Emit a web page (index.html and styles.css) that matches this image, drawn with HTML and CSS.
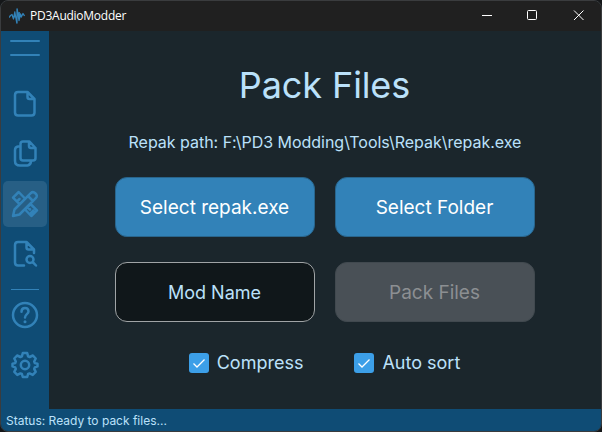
FILE: index.html
```html
<!DOCTYPE html>
<html lang="en">
<head>
<meta charset="utf-8">
<title>PD3AudioModder</title>
<link rel="stylesheet" href="styles.css">
</head>
<body>
<div class="window">
  <header class="titlebar">
    <svg class="logo" width="16" height="16" viewBox="0 0 16 16"><path d="M0 9.500L1.500 7.500 3 6.500 4.500 11 5.800 4 7.800 15 8.200 1 10 12.500 11.500 6 12.300 9 14 5.500 15.500 8M8 .5v15M5.800 3.500v6M10.200 4v7"/></svg>
    <span class="app-name">PD3AudioModder</span>
    <div class="controls">
      <svg width="46" height="30" viewBox="0 0 46 30"><path d="M18 14.500h10"/></svg>
      <svg width="46" height="30" viewBox="0 0 46 30"><rect x="17.500" y="9.500" width="9" height="9" rx="1"/></svg>
      <svg width="46" height="30" viewBox="0 0 46 30"><path d="M18 9.500l9.500 9.500M27.500 9.500L18 19"/></svg>
    </div>
  </header>
  <div class="body">
    <nav class="sidebar">
      <button class="menu" aria-label="Menu"><i></i><i></i></button>
      <button class="tool" aria-label="File"><svg width="30" height="30" viewBox="0 0 30 30"><path d="M8 3h9.500L24.500 10v13.500Q24.500 26.500 21.500 26.500H8Q5 26.500 5 23.500V6Q5 3 8 3ZM17.500 3v5Q17.500 10 19.500 10h5"/></svg></button>
      <button class="tool" aria-label="Batch"><svg width="30" height="30" viewBox="0 0 30 30"><path d="M13 2.500h6.500L25.500 9V19Q25.500 21.500 23 21.500H13Q10.500 21.500 10.500 19V5Q10.500 2.500 13 2.500ZM19 2.500v4.500Q19 9 21 9h4.500M10 7.500H8Q5 8 5 11v11q0 4.500 5 4.500h7.500q3-.3 3.500-4"/></svg></button>
      <button class="tool active" aria-label="Pack"><svg width="30" height="30" viewBox="0 0 30 30"><path d="M20.800 4.200Q23 2 25.500 4.500T25.800 9.200L9.500 25.500 3 27l1.500-6.500ZM18 7l5 5M15 9.500L8.700 3 3 8.700 9.500 15M7 12.500l2.500-2.500M15 20.500L21.300 27 27 21.300 20.500 15M17.500 18l2.500 2.500M20 15.500l-5 5M21 24l2.500-2.500"/></svg></button>
      <button class="tool" aria-label="Search file"><svg width="30" height="30" viewBox="0 0 30 30"><path d="M14 26.500H8Q5 26.500 5 23.500V6Q5 3 8 3h8.500L24 10.500V14M16.500 3v5.500q0 2 2 2H24"/><circle cx="20" cy="20.500" r="3.500"/><path d="M23 23.300L26 26.500"/></svg></button>
      <hr>
      <button class="tool" aria-label="Help"><svg width="30" height="30" viewBox="0 0 30 30"><circle cx="15" cy="15" r="12"/><path d="M11.500 11.800Q11.500 8 15 8t3.500 3.500c0 2.500-3.500 2.800-3.500 6"/><circle class="dot" cx="15" cy="21.700" r="1.500"/></svg></button>
      <button class="tool" aria-label="Settings"><svg width="30" height="30" viewBox="0 0 30 30"><circle cx="15" cy="15" r="4.200"/><path d="M12.800 3h4.400l.9 3.300 1.500.7 3.300-1.500 2.800 3-1.500 3 .6 1.600 2.700.7v2.600l-2.700 1-.6 1.500 1.500 3-3 3-3.100-1.500-1.500.6-.9 3h-4.400l-.9-3-1.500-.6-3.100 1.500-3-3 1.500-3-.6-1.500-2.700-1v-2.600l2.700-.7.6-1.600-1.500-3 2.800-3L10.400 7l1.500-.7Z"/></svg></button>
    </nav>
    <main class="content">
      <h1>Pack Files</h1>
      <p class="path">Repak path: F:\PD3 Modding\Tools\Repak\repak.exe</p>
      <div class="grid">
        <button class="box">Select repak.exe</button>
        <button class="box">Select Folder</button>
        <div class="box field">Mod Name</div>
        <button class="box disabled">Pack Files</button>
      </div>
      <div class="checks">
        <label><svg width="20" height="20" viewBox="0 0 20 20"><path d="M4.500 10.500L8 14l7.500-7.500"/></svg><span>Compress</span></label>
        <label><svg width="20" height="20" viewBox="0 0 20 20"><path d="M4.500 10.500L8 14l7.500-7.500"/></svg><span>Auto sort</span></label>
      </div>
    </main>
  </div>
  <footer class="status">Status: Ready to pack files...</footer>
</div>
</body>
</html>
```
FILE: styles.css
```css
* { box-sizing: border-box; }
body { margin: 0; background: #151719; font-family: Inter, sans-serif; }
button { border: 0; padding: 0; background: none; font: inherit; }
.window { width: 602px; height: 432px; border: 1px solid #3a3c3e; border-radius: 8px; overflow: hidden; display: flex; flex-direction: column; background: #1b262c; }
.titlebar { height: 30px; flex: none; display: flex; align-items: center; background: #202020; color: #fff; }
.logo { margin-left: 8px; margin-top: -1px; fill: none; stroke: #3282b8; stroke-width: 1.3; stroke-linejoin: round; }
.app-name { margin-left: 5px; margin-top: -2px; font: 12px "Open Sans", sans-serif; letter-spacing: -.25px; }
.controls { margin-left: auto; margin-right: -1px; display: flex; }
.controls svg { fill: none; stroke: #fff; stroke-width: 1; }
.body { flex: 1; display: flex; min-height: 0; }
.sidebar { width: 48px; background: #0f4c75; display: flex; flex-direction: column; align-items: center; gap: 4px; }
.menu { width: 30px; height: 46px; display: flex; flex-direction: column; gap: 12px; padding-top: 9px; }
.menu i { height: 2px; width: 30px; background: #3282b8; border-radius: 1px; }
.tool { width: 44px; height: 46px; border-radius: 5px; display: flex; align-items: center; justify-content: center; }
.tool svg { fill: none; stroke: #3282b8; stroke-width: 2.5; stroke-linejoin: round; stroke-linecap: round; }
.tool .dot { fill: #3282b8; stroke: none; }
.active { background: #275f85; }
.sidebar hr { width: 28px; height: 1px; border: 0; margin: 8px 0 -2px; background: #3282b8; }
.content { flex: 1; display: flex; flex-direction: column; align-items: center; color: #bbe1fa; padding-right: 1px; }
h1 { margin: 32px 0 0; font-size: 36px; line-height: 44px; font-weight: 400; letter-spacing: -.1px; }
.path { margin: 25px 0 0; padding-left: 1px; font-size: 16px; line-height: 20px; letter-spacing: -.02px; white-space: nowrap; }
.grid { margin-top: 25px; display: grid; grid-template-columns: 200px 200px; gap: 25px 20px; }
.box { height: 60px; border-radius: 12px; background: #3282b8; border: 1px solid #29658c; color: #fff; font-size: 19px; display: flex; align-items: center; justify-content: center; }
.field { background: #10171a; border-color: #a0a4a6; color: #bbe1fa; font-size: 18px; }
.disabled { background: #495056; border-color: #41494f; color: #8c8f92; }
.checks { display: flex; gap: 51px; margin-top: 31px; font-size: 18px; line-height: 20px; }
.checks label { display: flex; align-items: center; gap: 8px; }
.checks svg { background: #3c9fe8; border-radius: 3px; fill: none; stroke: #fff; stroke-width: 1.3; }
.status { height: 22px; flex: none; padding-left: 5px; background: #0f4c75; color: #bbe1fa; font-size: 12px; line-height: 23px; }
```
